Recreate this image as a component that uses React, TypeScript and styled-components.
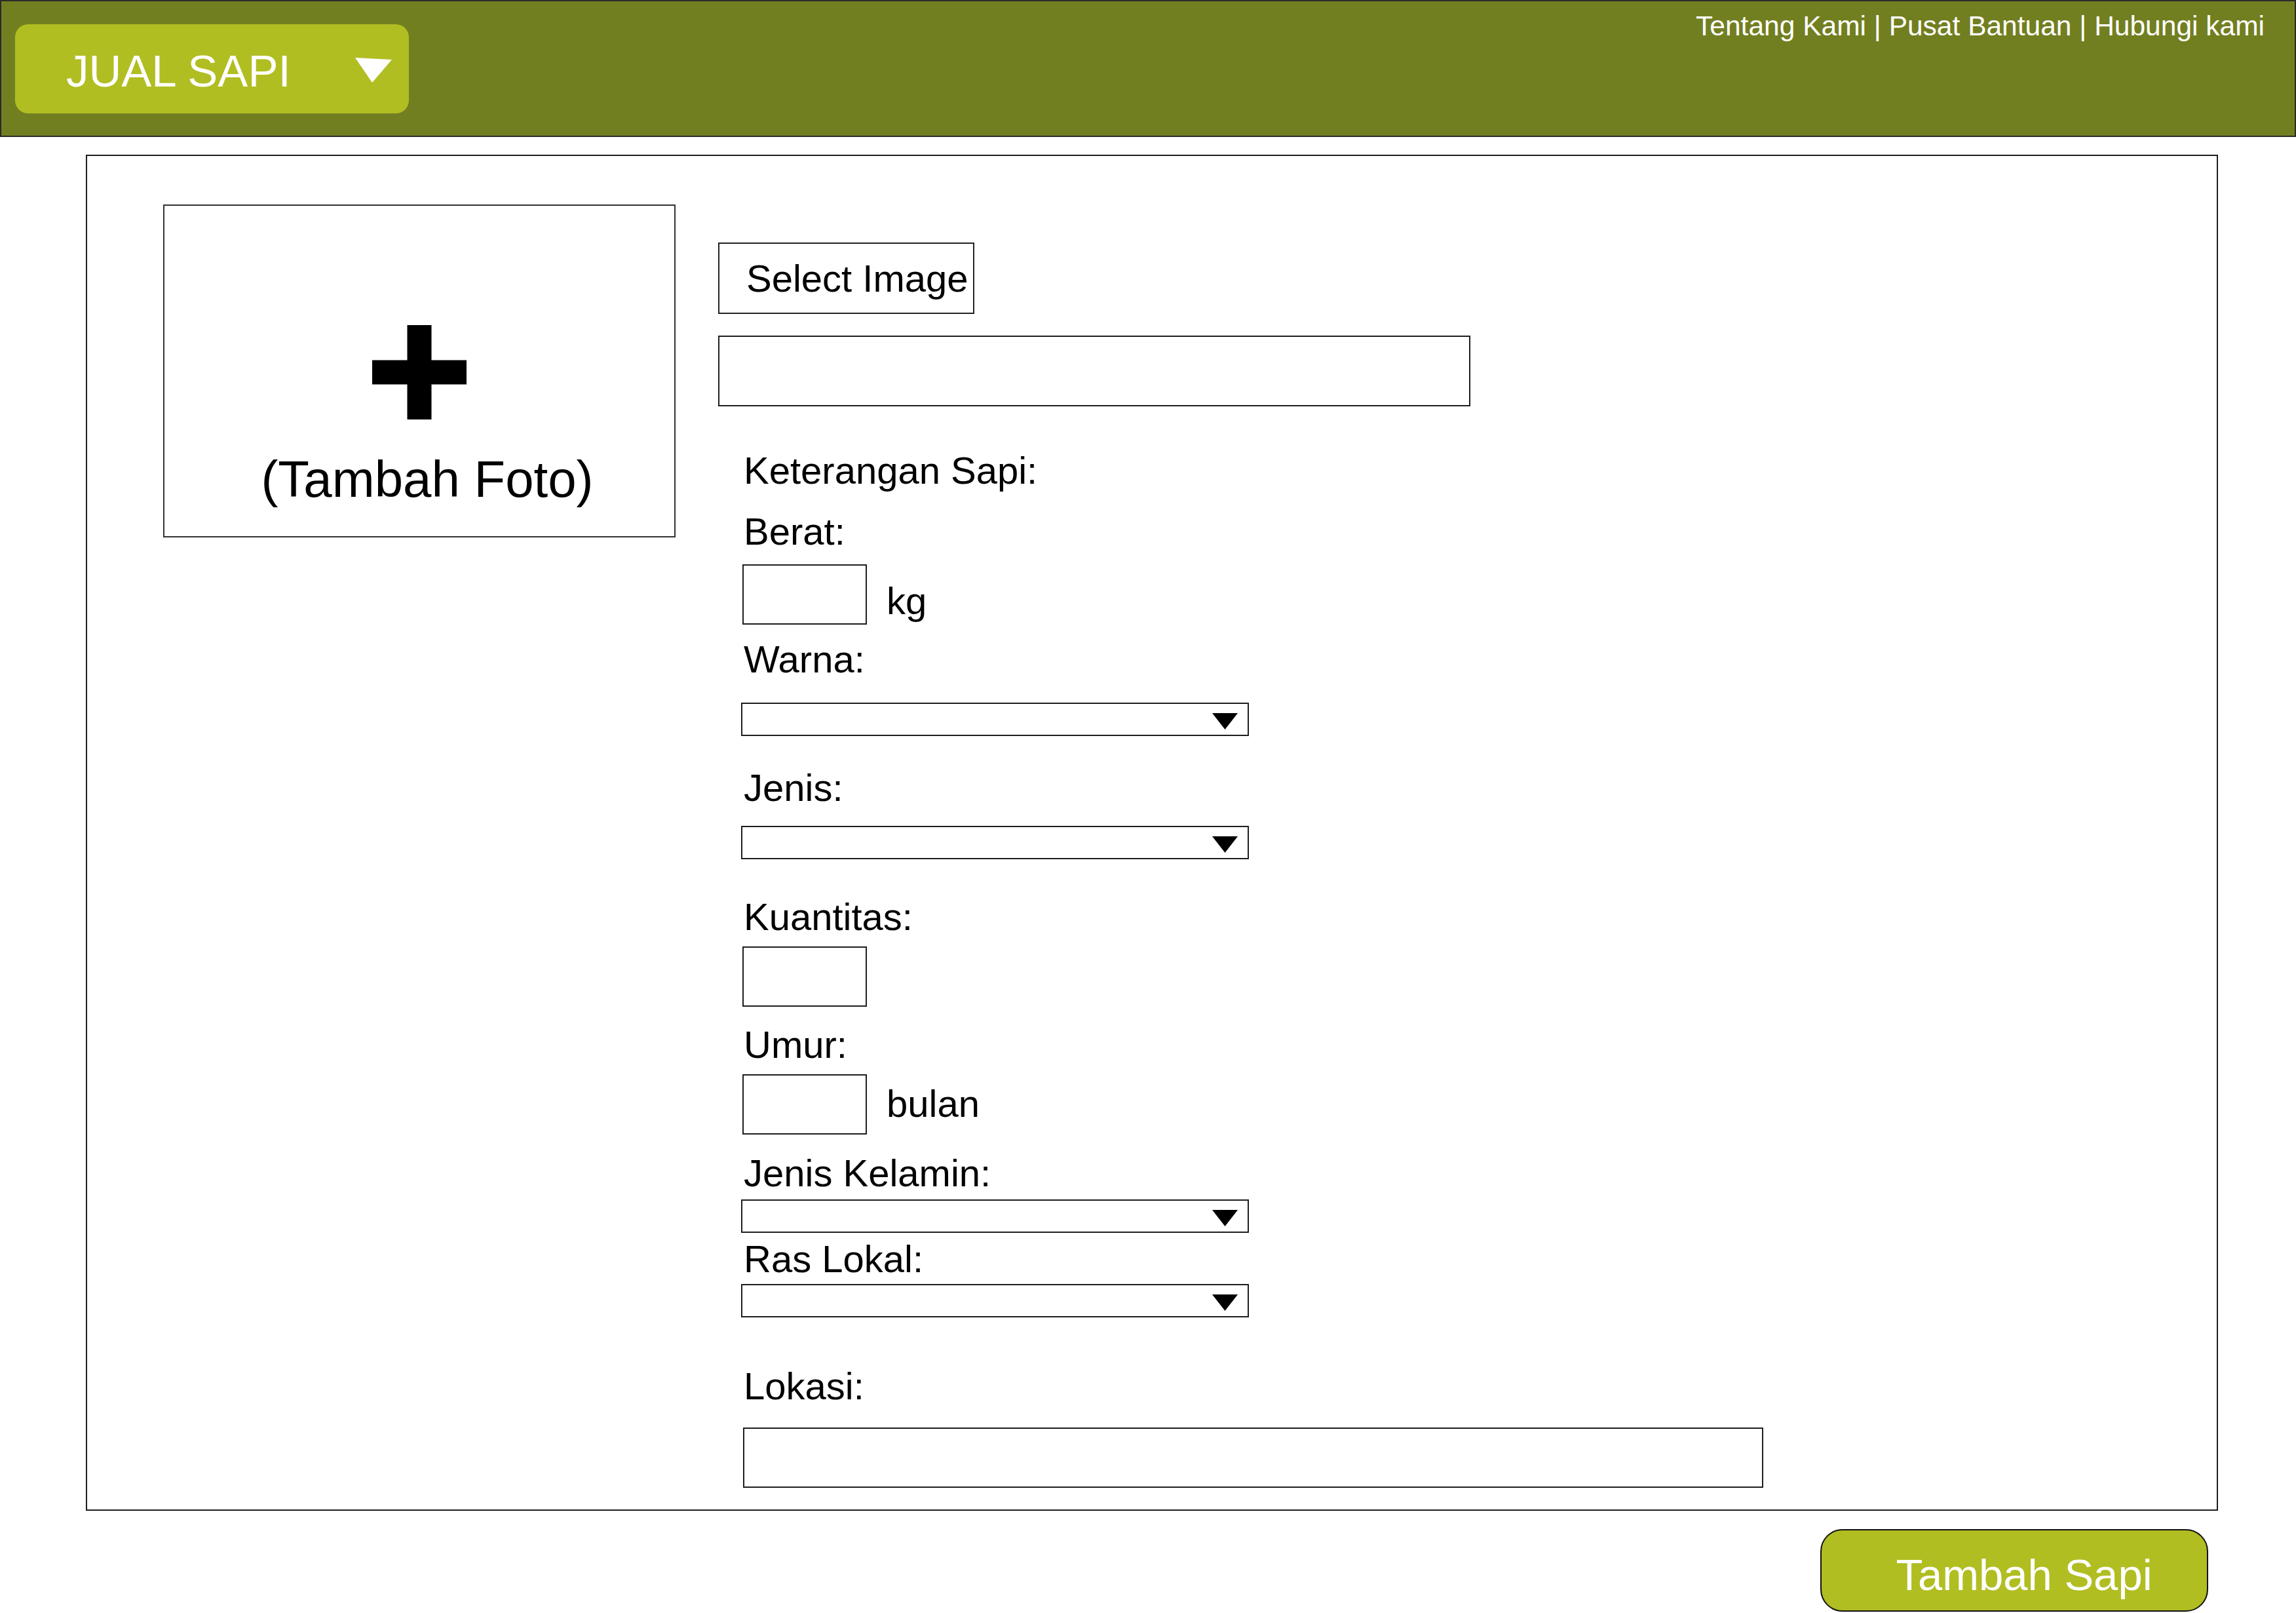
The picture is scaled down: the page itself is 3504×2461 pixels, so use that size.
import React from "react";
import styled, { createGlobalStyle } from "styled-components";

const GlobalStyle = createGlobalStyle`
  html, body {
    margin: 0;
    padding: 0;
    background: #ffffff;
    overflow: hidden;
  }
  body {
    font-family: "Liberation Sans", Arial, sans-serif;
    color: #000;
  }
  * { box-sizing: border-box; }
`;

const FONT = `"Liberation Sans", Arial, sans-serif`;

const Page = styled.div`
  width: 3504px;
  height: 2461px;
  display: flex;
  flex-direction: column;
`;

const Header = styled.header`
  height: 209px;
  background: #727f21;
  border: 2px solid #2a2a2a;
  display: flex;
  justify-content: space-between;
  align-items: flex-start;
  padding: 0 46px 0 21px;
`;

const MenuButton = styled.button`
  margin-top: 35px;
  width: 601px;
  height: 136px;
  border: none;
  border-radius: 20px;
  background: #b0be22;
  color: #ffffff;
  font-family: ${FONT};
  font-size: 69px;
  display: flex;
  align-items: center;
  padding: 6px 0 0 78px;
  cursor: pointer;
`;

const MenuCaret = styled.svg`
  margin-left: 98px;
  margin-top: -2px;
  flex: none;
`;

const TopLinks = styled.nav`
  margin-top: 14px;
  font-size: 42.5px;
  line-height: 48px;
  color: #ffffff;
  white-space: pre;
`;

const TopLink = styled.a`
  color: #ffffff;
  text-decoration: none;
`;

const Card = styled.main`
  margin: 27px 0 0 131px;
  width: 3254px;
  height: 2069px;
  border: 2px solid #1e1e1e;
  display: flex;
  align-items: flex-start;
  padding: 74px 0 0 116px;
  gap: 65px;
`;

const PhotoBox = styled.div`
  width: 782px;
  height: 508px;
  border: 2px solid #333333;
  display: flex;
  flex-direction: column;
  align-items: center;
  padding-top: 182px;
`;

const PhotoCaption = styled.div`
  margin-top: 47px;
  font-size: 78px;
  line-height: 88px;
  padding-left: 24px;
`;

const RightColumn = styled.section`
  margin-top: 58px;
  display: flex;
  flex-direction: column;
  align-items: flex-start;
`;

const SelectImageButton = styled.button`
  width: 391px;
  height: 109px;
  border: 2px solid #222222;
  background: #ffffff;
  font-family: ${FONT};
  font-size: 58px;
  color: #000;
  text-align: left;
  padding: 0 0 0 41px;
  white-space: nowrap;
  cursor: pointer;
`;

const TextBox = styled.input<{ $w: number; $h: number; $top: number; $left?: number }>`
  width: ${(p) => p.$w}px;
  height: ${(p) => p.$h}px;
  margin-top: ${(p) => p.$top}px;
  margin-left: ${(p) => p.$left ?? 0}px;
  border: 2px solid #1e1e1e;
  background: #ffffff;
  border-radius: 0;
  outline: none;
  padding: 0 12px;
  font-family: ${FONT};
  font-size: 40px;
  flex: none;
`;

const FormSection = styled.div`
  margin-left: 35px;
  display: flex;
  flex-direction: column;
  align-items: flex-start;
`;

const FieldLabel = styled.label<{ $top: number }>`
  display: block;
  margin-top: ${(p) => p.$top}px;
  padding-left: 4px;
  font-size: 58px;
  line-height: 66px;
  white-space: nowrap;
`;

const UnitRow = styled.div<{ $top: number }>`
  margin-top: ${(p) => p.$top}px;
  display: flex;
  align-items: flex-end;
`;

const Unit = styled.span<{ $bottom: number }>`
  margin-left: 30px;
  margin-bottom: ${(p) => p.$bottom}px;
  font-size: 58px;
  line-height: 66px;
`;

const Dropdown = styled.div<{ $top: number }>`
  margin-top: ${(p) => p.$top}px;
  width: 775px;
  height: 51px;
  border: 2px solid #1e1e1e;
  background: #ffffff;
  display: flex;
  justify-content: flex-end;
  align-items: center;
  padding: 6px 15px 0 0;
  cursor: pointer;
`;

const Actions = styled.footer`
  margin-top: 28px;
  display: flex;
  justify-content: flex-end;
  padding-right: 134px;
`;

const SubmitButton = styled.button`
  width: 592px;
  height: 126px;
  border: 2px solid #111111;
  border-radius: 34px;
  background: #b0be22;
  color: #ffffff;
  font-family: ${FONT};
  font-size: 67px;
  padding: 12px 0 0 30px;
  cursor: pointer;
`;

const Caret = () => (
  <svg width="39" height="25" viewBox="0 0 39 25" aria-hidden="true">
    <polygon points="0,0 39,0 19.5,25" fill="#000" />
  </svg>
);

const Select = ({ top }: { top: number }) => (
  <Dropdown $top={top} role="combobox" aria-expanded="false">
    <Caret />
  </Dropdown>
);

const PlusIcon = () => (
  <svg width="144" height="144" viewBox="0 0 144 144" aria-hidden="true">
    <rect x="53.5" y="0" width="37" height="144" fill="#000" />
    <rect x="0" y="53.5" width="144" height="37" fill="#000" />
  </svg>
);

export default function App() {
  return (
    <>
      <GlobalStyle />
      <Page>
        <Header>
          <MenuButton>
            JUAL SAPI
            <MenuCaret width="56" height="38" viewBox="0 0 56 38" aria-hidden="true">
              <polygon points="0,0 56,3 26,38" fill="#ffffff" />
            </MenuCaret>
          </MenuButton>
          <TopLinks>
            <TopLink href="#">Tentang Kami</TopLink> | <TopLink href="#">Pusat Bantuan</TopLink> |{" "}
            <TopLink href="#">Hubungi kami</TopLink>
          </TopLinks>
        </Header>

        <Card>
          <PhotoBox>
            <PlusIcon />
            <PhotoCaption>(Tambah Foto)</PhotoCaption>
          </PhotoBox>

          <RightColumn>
            <SelectImageButton>Select Image</SelectImageButton>
            <TextBox $w={1148} $h={108} $top={33} readOnly />

            <FormSection>
              <FieldLabel $top={65}>Keterangan Sapi:</FieldLabel>

              <FieldLabel $top={27}>Berat:</FieldLabel>
              <UnitRow $top={17}>
                <TextBox $w={190} $h={92} $top={0} $left={2} />
                <Unit $bottom={3}>kg</Unit>
              </UnitRow>

              <FieldLabel $top={20}>Warna:</FieldLabel>
              <Select top={33} />

              <FieldLabel $top={46}>Jenis:</FieldLabel>
              <Select top={25} />

              <FieldLabel $top={55}>Kuantitas:</FieldLabel>
              <TextBox $w={190} $h={92} $top={12} $left={2} />

              <FieldLabel $top={25}>Umur:</FieldLabel>
              <UnitRow $top={12}>
                <TextBox $w={190} $h={92} $top={0} $left={2} />
                <Unit $bottom={14}>bulan</Unit>
              </UnitRow>

              <FieldLabel $top={26}>Jenis Kelamin:</FieldLabel>
              <Select top={7} />

              <FieldLabel $top={7}>Ras Lokal:</FieldLabel>
              <Select top={5} />

              <FieldLabel $top={72}>Lokasi:</FieldLabel>
              <TextBox $w={1557} $h={92} $top={30} $left={3} />
            </FormSection>
          </RightColumn>
        </Card>

        <Actions>
          <SubmitButton>Tambah Sapi</SubmitButton>
        </Actions>
      </Page>
    </>
  );
}
